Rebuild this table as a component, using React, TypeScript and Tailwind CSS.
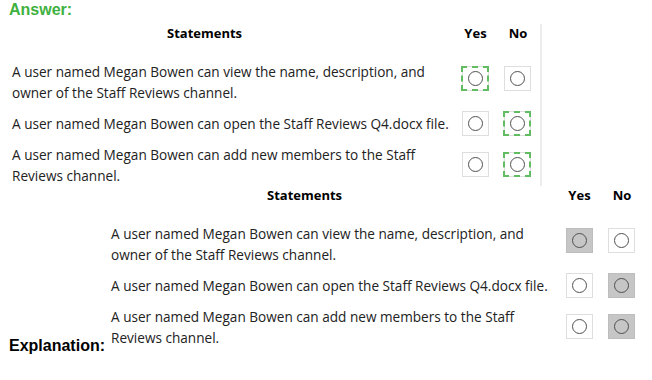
import clsx from 'clsx';

type Mark = 'none' | 'picked' | 'filled';

interface Statement {
  lines: string[];
  yes: Mark;
  no: Mark;
  rowClass: string;
  boxClass: string;
}

const STATEMENTS = [
  ['A user named Megan Bowen can view the name, description, and', 'owner of the Staff Reviews channel.'],
  ['A user named Megan Bowen can open the Staff Reviews Q4.docx file.'],
  ['A user named Megan Bowen can add new members to the Staff', 'Reviews channel.'],
];

// row spacing is the same in both panels, only the marks differ
const LAYOUT = [
  { rowClass: 'mt-[17px] items-start', boxClass: 'mt-[5px]' },
  { rowClass: 'mt-[8px] items-center', boxClass: '' },
  { rowClass: 'mt-[8px] items-start', boxClass: 'mt-[8px]' },
];

const answerRows: Statement[] = STATEMENTS.map((lines, i) => ({
  lines,
  yes: i === 0 ? 'picked' : 'none',
  no: i === 0 ? 'none' : 'picked',
  ...LAYOUT[i],
}));

const explanationRows: Statement[] = STATEMENTS.map((lines, i) => ({
  lines,
  yes: i === 0 ? 'filled' : 'none',
  no: i === 0 ? 'none' : 'filled',
  ...LAYOUT[i],
}));

function Box({ mark }: { mark: Mark }) {
  return (
    <div
      className={clsx(
        'relative flex h-[25px] w-[27px] items-center justify-center border',
        mark === 'filled' ? 'border-[#bdbdbd] bg-[#c6c6c6]' : 'border-[#dedede] bg-white'
      )}
    >
      <div className="h-[15px] w-[15px] rounded-full border border-[#505050]" />
      {mark === 'picked' && (
        <div className="absolute -left-[2px] -right-px -top-px -bottom-px border-2 border-dashed border-[#62bd62]" />
      )}
    </div>
  );
}

interface PanelProps {
  rows: Statement[];
  textWidth: string;
  headLeft: string;
  className?: string;
}

function Panel({ rows, textWidth, headLeft, className }: PanelProps) {
  return (
    <div className={clsx('flex h-[162px] flex-col', className)}>
      <div className="flex h-[20px] items-center text-[13px] font-bold text-black">
        <div className={textWidth}>
          <span className={headLeft}>Statements</span>
        </div>
        <div className="w-[27px] text-center">Yes</div>
        <div className="ml-[15px] w-[28px] text-center">No</div>
      </div>
      {rows.map((row, i) => (
        <div key={i} className={clsx('flex', row.rowClass)}>
          <div className={clsx(textWidth, 'text-[13.6px] leading-[21px] text-[#222]')}>
            {row.lines.map((line, j) => (
              <div key={j} className="whitespace-nowrap">
                {line}
              </div>
            ))}
          </div>
          <div className={clsx('flex gap-[15px]', row.boxClass)}>
            <Box mark={row.yes} />
            <Box mark={row.no} />
          </div>
        </div>
      ))}
    </div>
  );
}

export default function App() {
  return (
    <div className="h-[380px] w-[652px] overflow-hidden bg-white font-['Open_Sans',sans-serif]">
      <div className="h-[24px] pl-[9px] pt-px font-['Liberation_Sans',Arial,sans-serif] text-[16px] font-bold leading-[18px] text-[#3fb13f]">
        Answer:
      </div>
      <Panel
        rows={answerRows}
        textWidth="w-[450px]"
        headLeft="ml-[155px]"
        className="w-[542px] border-r-2 border-[#ececec] pl-[12px]"
      />
      <div className="flex items-end">
        <div className="-mb-[7px] ml-[9px] w-[96px] font-['Liberation_Sans',Arial,sans-serif] text-[16px] font-bold leading-[18px] text-black">
          Explanation:
        </div>
        <Panel rows={explanationRows} textWidth="w-[455px]" headLeft="ml-[156px]" className="pl-[6px]" />
      </div>
    </div>
  );
}
